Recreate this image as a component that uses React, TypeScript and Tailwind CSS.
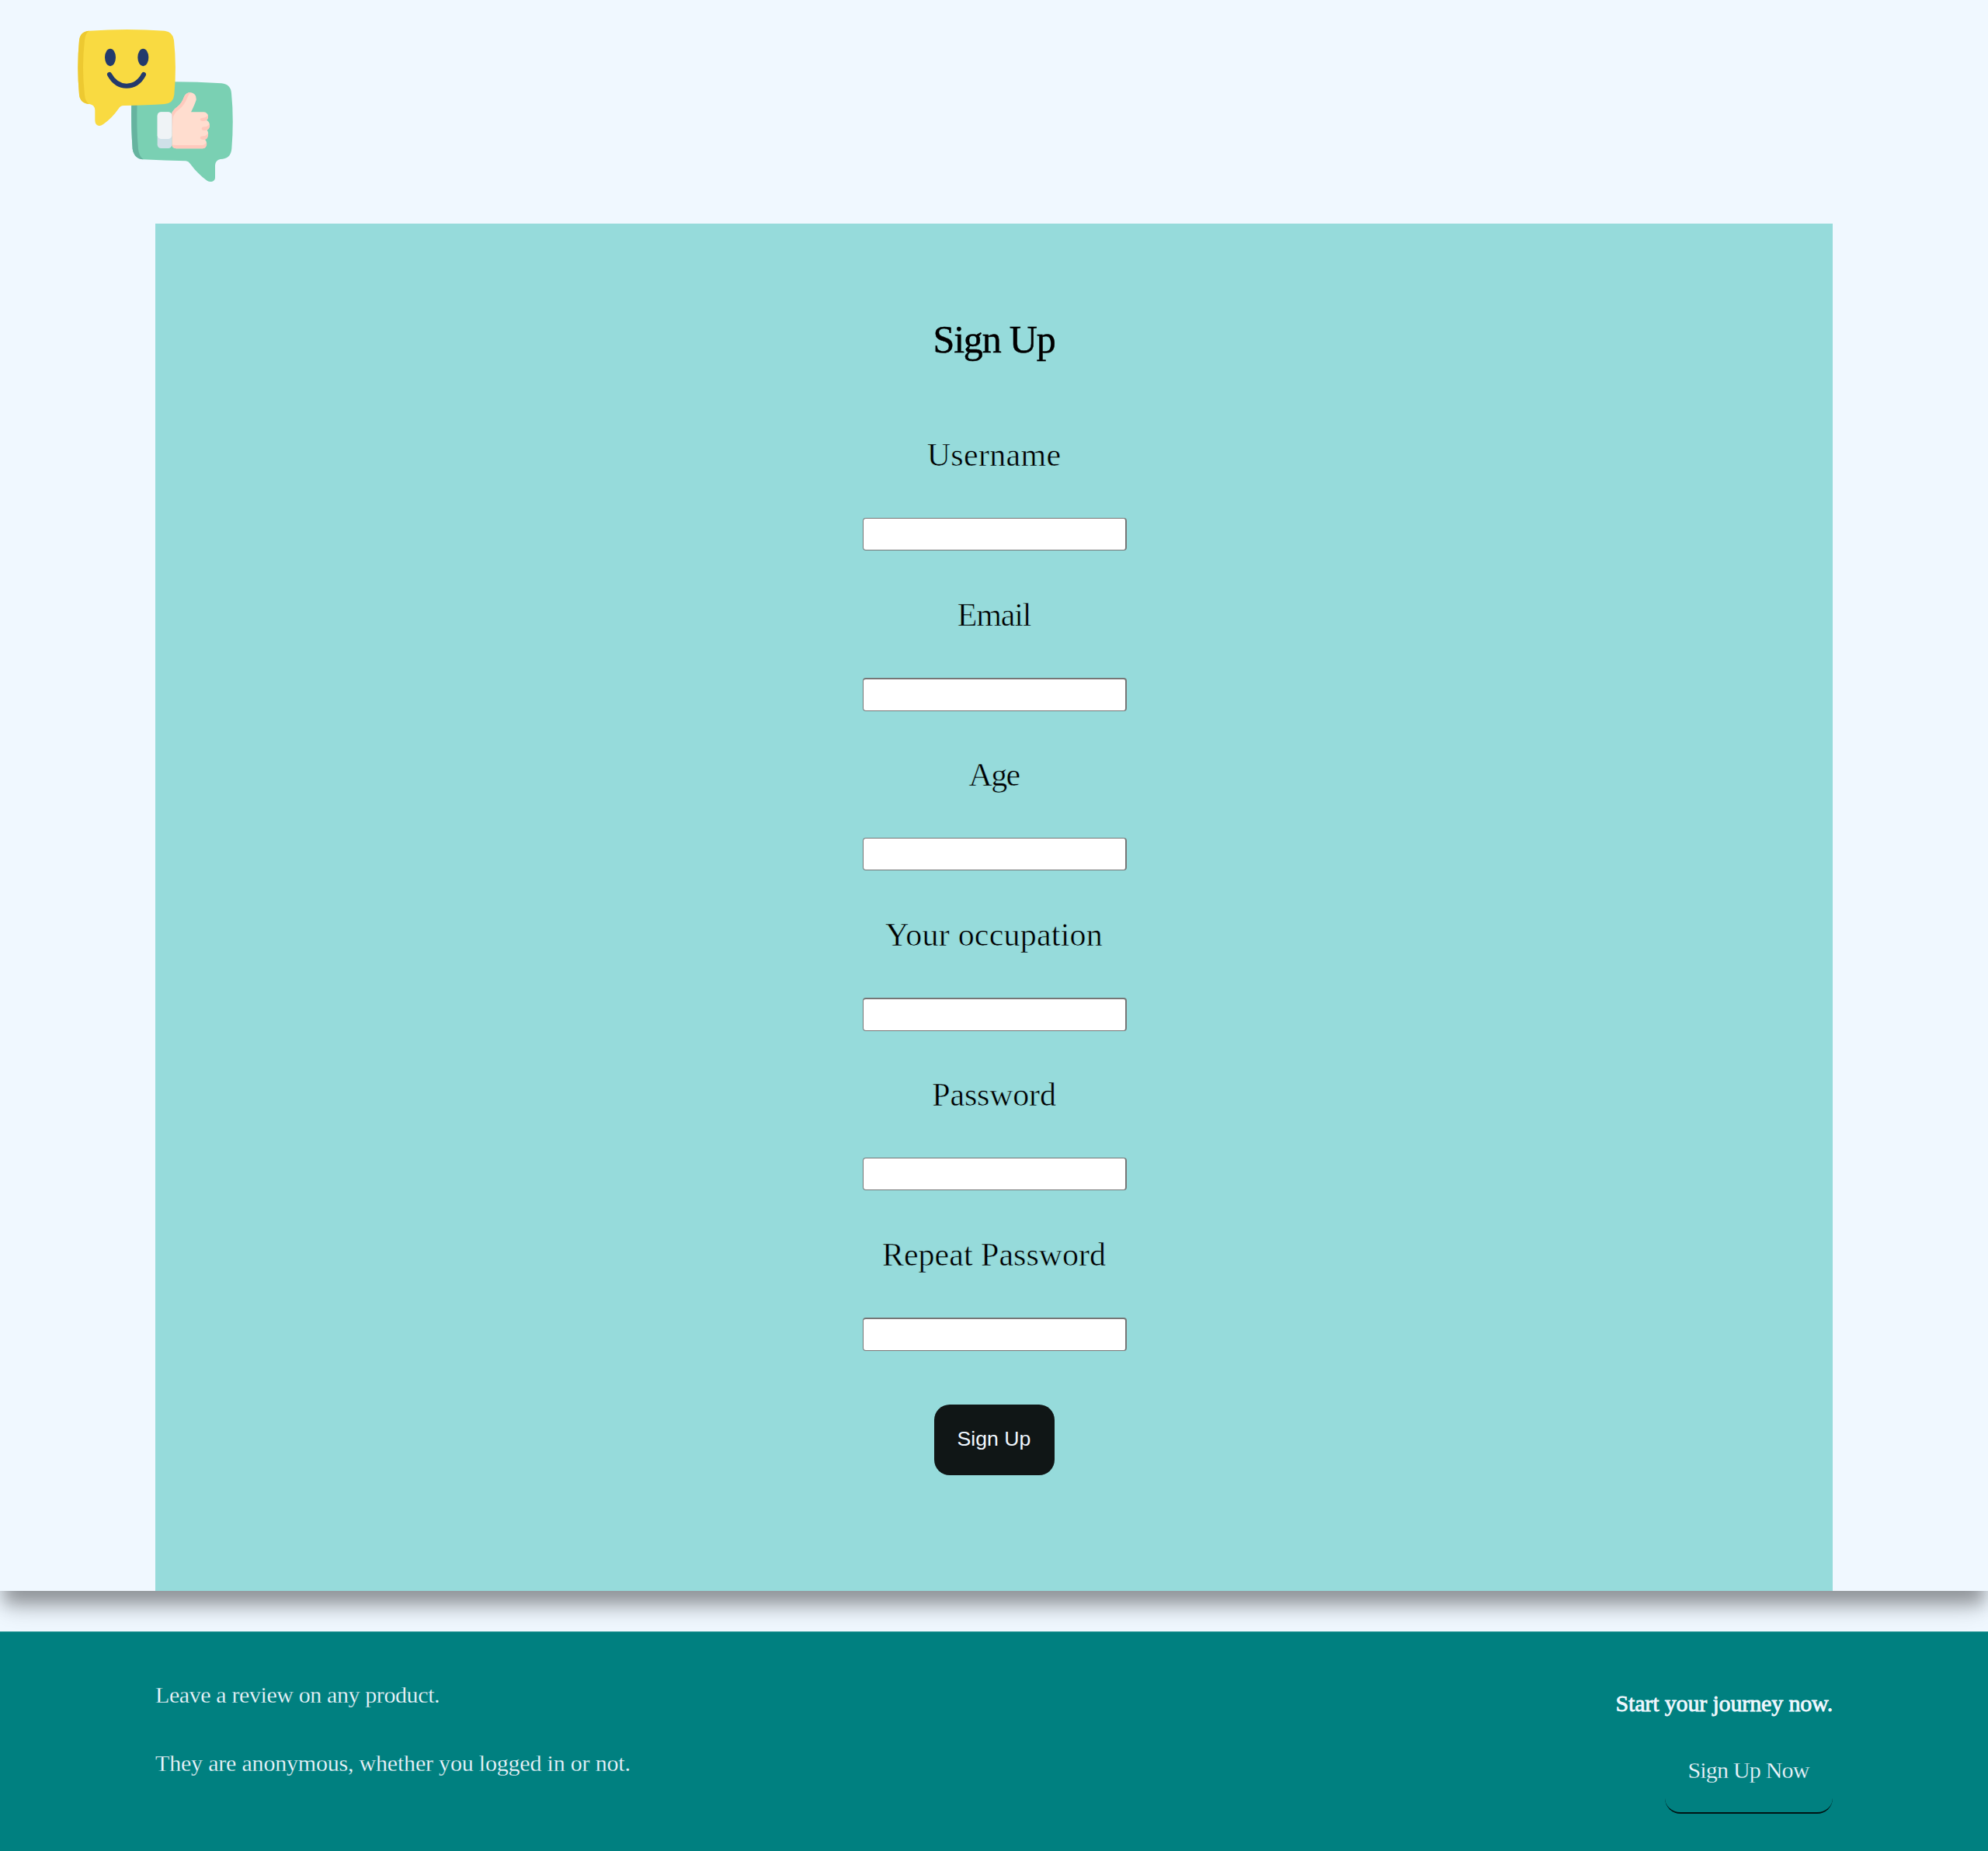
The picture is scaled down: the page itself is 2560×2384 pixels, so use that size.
const fields = [
  { label: 'Username', type: 'text', text: 'tracking-[0.3px]', box: 'h-[42px] border-t' },
  { label: 'Email', type: 'email', text: 'tracking-[-1.2px]', box: 'h-[43px] border-t-2' },
  { label: 'Age', type: 'text', text: 'tracking-[-1.7px]', box: 'h-[42px] border-t' },
  { label: 'Your occupation', type: 'text', text: 'tracking-[0.2px]', box: 'h-[43px] border-t-2' },
  { label: 'Password', type: 'password', text: 'tracking-[-0.2px]', box: 'h-[42px] border-t' },
  { label: 'Repeat Password', type: 'password', text: 'tracking-[0px]', box: 'h-[43px] border-t-2' },
];

function Logo() {
  return (
    <svg className="ml-[80px] mt-[20px] h-[230px] w-[240px]" viewBox="0 0 720 690">
      <path fill="#7ad0b3" d="M268 330Q266 440 272 515Q278 553 312 556Q400 560 478 562Q488 563 495 573Q524 613 560 638Q570 644 580 641Q591 637 591 626V579Q592 559 611 555Q652 555 655 514Q664 400 654 300Q651 265 616 262Q530 256 430 256Z" />
      <path fill="#66b39f" d="M268 330Q266 440 272 515Q278 553 314 556Q297 544 294 515Q287 440 290 330Z" />
      <path fill="#f9da41" d="M106 59Q70 60 66 96Q56 200 66 306Q70 340 106 342Q126 346 127 365V406Q128 424 142 426Q150 427 159 420Q193 396 218 360Q225 348 238 348Q330 347 396 342Q430 339 433 306Q443 200 432 96Q428 62 396 59Q250 49 106 59Z" />
      <path fill="#edc931" d="M106 59Q70 60 66 96Q56 200 66 306Q70 340 106 342Q90 336 87 306Q75 200 87 96Q91 62 106 59Z" />
      <ellipse cx="186" cy="162" rx="21" ry="34" fill="#233a6c" />
      <ellipse cx="313" cy="162" rx="21" ry="34" fill="#233a6c" />
      <path d="M183 228Q207 272 249 272Q292 272 315 228" fill="none" stroke="#233a6c" strokeWidth="18" strokeLinecap="round" />
      <path fill="#ffddcf" d="M424 374Q434 360 446 352Q462 340 472 312Q480 297 496 297Q520 301 518 326Q512 344 498 373H548Q562 375 564 389Q564 399 558 405Q571 411 570 427Q569 438 560 443Q566 450 564 462Q562 473 552 479Q560 487 558 498Q556 512 543 514H440Q424 512 424 498Z" />
      <path fill="#ffc9bd" d="M424 500V385Q424 366 446 352Q462 340 472 312Q480 296 500 298Q490 302 486 312Q472 348 452 362Q430 378 428 398Q424 450 424 500Z" />
      <path fill="#ffc9bd" d="M424 497Q428 501 440 501H543Q554 500 556 490Q560 494 558 500Q556 512 543 514H440Q424 512 424 497ZM533 401Q534 395 545 395Q560 395 563 381Q568 405 548 408Q533 408 533 401ZM539 437Q540 430 551 430Q566 429 569 416Q574 443 551 444Q539 444 539 437ZM533 472Q534 466 545 466Q560 465 563 453Q568 477 548 480Q533 480 533 472Z" />
      <rect x="368" y="373" width="56" height="140" rx="14" fill="#cfe0e8" />
      <path fill="#eff3f6" d="M382 373H410Q424 374 424 387V463Q423 476 410 477H382Q369 476 368 463V387Q369 374 382 373Z" />
    </svg>
  );
}

export default function App() {
  return (
    <div className="flex h-[2384px] w-[2560px] flex-col bg-[#f0f8ff] font-['Liberation_Serif',serif] text-black">
      <div className="h-[2049px] shadow-[0_22px_20px_-5px_rgba(0,0,0,0.3),0_24px_36px_-4px_rgba(0,0,0,0.15)]">
        <header className="h-[288px] overflow-hidden">
          <Logo />
        </header>
        <main className="mx-[200px] flex h-[1761px] flex-col items-center bg-[#96dbdb]">
          <h1 className="mt-[119px] h-[60px] text-[50px] leading-[60px] tracking-[-1.2px] [-webkit-text-stroke:0.5px_black]">Sign Up</h1>
          <form className="mt-[94px] flex flex-col items-center">
            {fields.map((f) => (
              <label key={f.label} className="flex h-[206px] flex-col items-center">
                <span className={`h-[106px] text-[42px] leading-[50px] whitespace-nowrap [-webkit-text-stroke:0.55px_#96dbdb] ${f.text}`}>{f.label}</span>
                <input type={f.type} className={`ml-[2px] w-[340px] shrink-0 rounded-[4px] border-r-2 border-b border-l border-[#767676] bg-white ${f.box}`} />
              </label>
            ))}
            <button type="button" className="mt-[12px] h-[91px] w-[155px] rounded-[20px] bg-[#101616] pb-[3px] font-['Liberation_Sans',sans-serif] text-[26.67px] text-[#f0f8ff]">
              Sign Up
            </button>
          </form>
        </main>
      </div>
      <footer className="mt-[52px] flex h-[283px] justify-between border-t border-[#50aaaa] bg-[#008080] px-[200px] text-[30px] leading-[36px] text-[#f0f8ff]">
        <div className="pt-[63px] [-webkit-text-stroke:0.3px_#008080]">
          <p className="tracking-[-0.4px] whitespace-nowrap">Leave a review on any product.</p>
          <p className="mt-[52px] tracking-[-0.2px] whitespace-nowrap">They are anonymous, whether you logged in or not.</p>
        </div>
        <div className="flex flex-col items-end pt-[74px]">
          <p className="tracking-[-0.15px] whitespace-nowrap [-webkit-text-stroke:0.8px_#f0f8ff]">Start your journey now.</p>
          <a className="mt-[24px] flex h-[100px] w-[216px] justify-center rounded-[20px] border-b-2 border-[#001414] pt-[26px] pr-[1px] tracking-[-0.8px] whitespace-nowrap [-webkit-text-stroke:0.3px_#008080]">
            Sign Up Now
          </a>
        </div>
      </footer>
    </div>
  );
}
